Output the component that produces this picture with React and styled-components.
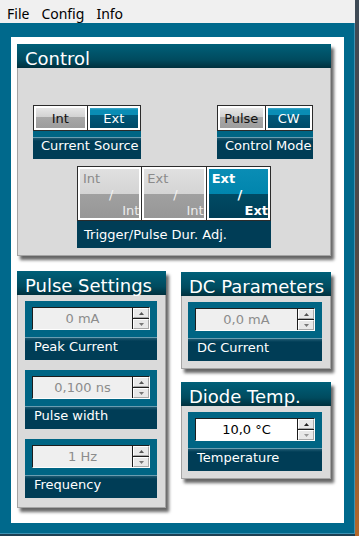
import React from 'react';
import styled, { createGlobalStyle } from 'styled-components';

const GlobalStyle = createGlobalStyle`
    html, body {
        margin: 0;
        padding: 0;
    }
    body {
        font-family: "DejaVu Sans", Verdana, sans-serif;
    }
`;

const colors = {
    frame: '#00698c',
    teal: '#006584',
    dark: '#003d56',
    body: '#dadada',
};

function App() {
    return (
        <>
            <GlobalStyle />
            <Screen>
                <Window>
                    <MenuBar>
                        <MenuItem>File</MenuItem>
                        <MenuItem>Config</MenuItem>
                        <MenuItem>Info</MenuItem>
                    </MenuBar>
                    <Frame>
                        <Sheet>
                            <ControlGroup />
                            <Columns>
                                <PulseSettings />
                                <RightColumn>
                                    <DcParameters />
                                    <DiodeTemp />
                                </RightColumn>
                            </Columns>
                        </Sheet>
                    </Frame>
                </Window>
                <Desktop />
            </Screen>
        </>
    );
}

const Screen = styled.div`
    display: flex;
    width: 359px;
    height: 536px;
    overflow: hidden;
`;

const Window = styled.div`
    display: flex;
    flex-direction: column;
    width: 355px;
    background: #1d3f52;
`;

const Desktop = styled.div`
    flex: 1;
    background: linear-gradient(#3e4a56, #4d4a48 45%, #7a5436 75%, #b4692c);
`;

const MenuBar = styled.div`
    display: flex;
    gap: 12px;
    box-sizing: border-box;
    height: 23px;
    padding: 4px 0 0 7px;
    background: #f0f0f0;
    font: 14px/19px "Noto Sans", "Liberation Sans", sans-serif;
    color: #000;
`;

const MenuItem = styled.span``;

const Frame = styled.div`
    display: flex;
    flex: 1;
    margin-bottom: 2px;
    padding: 14px 10px 10px 11px;
    background: ${colors.frame};
    border-right: 1px solid #3d91b2;
    border-bottom: 1px solid #3d91b2;
`;

const Sheet = styled.div`
    flex: 1;
    display: flex;
    flex-direction: column;
    padding: 7px 13px 0 6px;
    background: #fff;
`;

const Columns = styled.div`
    display: grid;
    grid-template-columns: 149px 150px;
    column-gap: 15px;
    align-items: start;
    margin-top: 15px;
`;

const RightColumn = styled.div`
    display: flex;
    flex-direction: column;
    gap: 13px;
    margin-top: 1px;
`;

// group box //
const Group = styled.section`
    display: flex;
    flex-direction: column;
    background: ${colors.body};
    border: 1px solid #a4a4a4;
    border-top: none;
    box-shadow: 3px 4px 3px rgba(0, 0, 0, 0.6);
`;

const GroupTitle = styled.div`
    box-sizing: border-box;
    height: 24px;
    margin: 0 -1px;
    padding: 5px 0 0 8px;
    background: linear-gradient(#006079, #004b5f 65%, #00303d);
    font-size: 18px;
    line-height: 19px;
    color: #fff;
    white-space: nowrap;
`;

const GroupBody = styled.div`
    display: flex;
    flex-direction: column;
    gap: ${props => props.$gap || 10}px;
    padding: ${props => props.$pad};
`;

// control //
function ControlGroup() {
    return (
        <Group>
            <GroupTitle>Control</GroupTitle>
            <GroupBody $pad="37px 17px 7px 15px" $gap={7}>
                <ControlRow>
                    <Widget $w={108}>
                        <ToggleRow>
                            <ToggleCell><ToggleFace>Int</ToggleFace></ToggleCell>
                            <ToggleCell><ToggleFace $on>Ext</ToggleFace></ToggleCell>
                        </ToggleRow>
                        <WidgetBar />
                        <WidgetLabel>Current Source</WidgetLabel>
                    </Widget>
                    <Widget $w={96}>
                        <ToggleRow>
                            <ToggleCell><ToggleFace>Pulse</ToggleFace></ToggleCell>
                            <ToggleCell><ToggleFace $on>CW</ToggleFace></ToggleCell>
                        </ToggleRow>
                        <WidgetBar />
                        <WidgetLabel>Control Mode</WidgetLabel>
                    </Widget>
                </ControlRow>
                <TriggerWidget>
                    <ToggleRow>
                        <TriggerOption from="Int" to="Int" />
                        <TriggerOption from="Ext" to="Int" />
                        <TriggerOption from="Ext" to="Ext" on />
                    </ToggleRow>
                    <TriggerLabel>Trigger/Pulse Dur. Adj.</TriggerLabel>
                </TriggerWidget>
            </GroupBody>
        </Group>
    );
}

function TriggerOption({ from, to, on }) {
    return (
        <ToggleCell>
            <TriggerFace $on={on}>
                <span className="from">{from}</span>
                <span className="slash">/</span>
                <span className="to">{to}</span>
            </TriggerFace>
        </ToggleCell>
    );
}

const ControlRow = styled.div`
    display: flex;
    justify-content: space-between;
`;

const Widget = styled.div`
    display: flex;
    flex-direction: column;
    width: ${props => props.$w}px;
    background: ${colors.dark};
`;

const TriggerWidget = styled(Widget)`
    align-self: center;
    width: 194px;
    margin-left: 2px;
`;

const ToggleRow = styled.div`
    display: flex;
    border: 1px solid #2b2b2b;
    background: #fff;
`;

const ToggleCell = styled.div`
    flex: 1;
    padding: 2px;

    & + & {
        border-left: 1px solid #2b2b2b;
    }
`;

const ToggleFace = styled.div`
    box-sizing: border-box;
    height: 20px;
    padding-top: 2px;
    font-size: 13px;
    line-height: 18px;
    text-align: center;
    color: ${props => (props.$on ? '#fff' : '#111')};
    background: ${props => (props.$on
        ? 'linear-gradient(#44abcb, #0a8db5 2px, #0a8db5 35%, #00597b 35%, #004b68)'
        : 'linear-gradient(#e6e6e6, #d2d2d2 45%, #a8a8a8 45%, #9d9d9d)')};
`;

const TriggerFace = styled.div`
    display: flex;
    flex-direction: column;
    justify-content: space-between;
    box-sizing: border-box;
    height: 49px;
    padding: 2px 0 0 3px;
    overflow: hidden;
    font-size: 13px;
    line-height: 15px;
    font-weight: ${props => (props.$on ? 700 : 400)};
    background: ${props => (props.$on
        ? 'linear-gradient(#0a8db5, #0085ad 52%, #004a64 52%, #003f57)'
        : 'linear-gradient(#e0e0e0, #d4d4d4 52%, #a0a0a0 52%, #979797)')};

    .from {
        align-self: flex-start;
        color: ${props => (props.$on ? '#fff' : '#8a8a8a')};
    }
    .slash {
        align-self: center;
        color: ${props => (props.$on ? '#fff' : '#f2f2f2')};
    }
    .to {
        align-self: flex-end;
        color: ${props => (props.$on ? '#fff' : '#ececec')};
    }
`;

const WidgetBar = styled.div`
    height: 6px;
    background: ${colors.teal};
    border-bottom: 1px solid #6a9db1;
`;

const WidgetLabel = styled.div`
    height: 21px;
    padding-left: 8px;
    background: linear-gradient(#1f5a72, ${colors.dark} 3px);
    font-size: 13px;
    line-height: 16px;
    color: #fff;
    white-space: nowrap;
`;

const TriggerLabel = styled.div`
    box-sizing: border-box;
    height: 27px;
    padding: 6px 0 0 7px;
    font-size: 13px;
    line-height: 16px;
    color: #fff;
`;

// spin panels //
function SpinPanel({ value, label, enabled }) {
    return (
        <Panel>
            <PanelTop>
                <Spin>
                    <SpinField $enabled={enabled}>{value}</SpinField>
                    <SpinButtons>
                        <SpinButton><Arrow up enabled={enabled} /></SpinButton>
                        <SpinButton><Arrow enabled={enabled} /></SpinButton>
                    </SpinButtons>
                </Spin>
            </PanelTop>
            <PanelLabel>{label}</PanelLabel>
        </Panel>
    );
}

function Arrow({ up, enabled }) {
    const fill = up ? (enabled ? '#222' : '#555') : (enabled ? '#999' : '#777');
    return (
        <svg width="5" height="3" viewBox="0 0 5 3">
            <polygon points={up ? '0,3 5,3 2.5,0' : '0,0 5,0 2.5,3'} fill={fill} />
        </svg>
    );
}

const Panel = styled.div`
    display: flex;
    flex-direction: column;
    background: ${colors.dark};
`;

const PanelTop = styled.div`
    padding: 6px 7px 7px;
    background: ${colors.teal};
    border-bottom: 1px solid #6a9db1;
`;

const PanelLabel = styled.div`
    height: 22px;
    padding: 0 0 0 9px;
    background: linear-gradient(#1f5a72, ${colors.dark} 3px);
    font-size: 13px;
    line-height: 17px;
    color: #fff;
`;

const Spin = styled.div`
    display: flex;
    box-sizing: border-box;
    height: 23px;
    border: 1px solid;
    border-color: #1c1c1c #fdfdfd #fdfdfd #1c1c1c;
`;

const SpinField = styled.div`
    flex: 1;
    font-size: 13px;
    line-height: 21px;
    text-align: center;
    color: ${props => (props.$enabled ? '#000' : '#8c8c8c')};
    background: ${props => (props.$enabled ? '#fff' : '#efefef')};
`;

const SpinButtons = styled.div`
    display: flex;
    flex-direction: column;
    width: 16px;
    border-left: 1px solid #1c1c1c;
    background: #1c1c1c;
    gap: 1px;
`;

const SpinButton = styled.div`
    display: flex;
    align-items: center;
    justify-content: center;
    flex: 1;
    box-sizing: border-box;
    background: #e8e8e8;
    border: 1px solid;
    border-color: #fff #a8a8a8 #a8a8a8 #fff;
`;

function PulseSettings() {
    return (
        <Group>
            <GroupTitle>Pulse Settings</GroupTitle>
            <GroupBody $pad="6px 8px 9px 7px">
                <SpinPanel value="0 mA" label="Peak Current" />
                <SpinPanel value="0,100 ns" label="Pulse width" />
                <SpinPanel value="1 Hz" label="Frequency" />
            </GroupBody>
        </Group>
    );
}

function DcParameters() {
    return (
        <Group>
            <GroupTitle>DC Parameters</GroupTitle>
            <GroupBody $pad="6px 8px 7px 6px">
                <SpinPanel value="0,0 mA" label="DC Current" />
            </GroupBody>
        </Group>
    );
}

function DiodeTemp() {
    return (
        <Group>
            <GroupTitle>Diode Temp.</GroupTitle>
            <GroupBody $pad="6px 8px 7px 6px">
                <SpinPanel value="10,0 °C" label="Temperature" enabled />
            </GroupBody>
        </Group>
    );
}

export default App;
